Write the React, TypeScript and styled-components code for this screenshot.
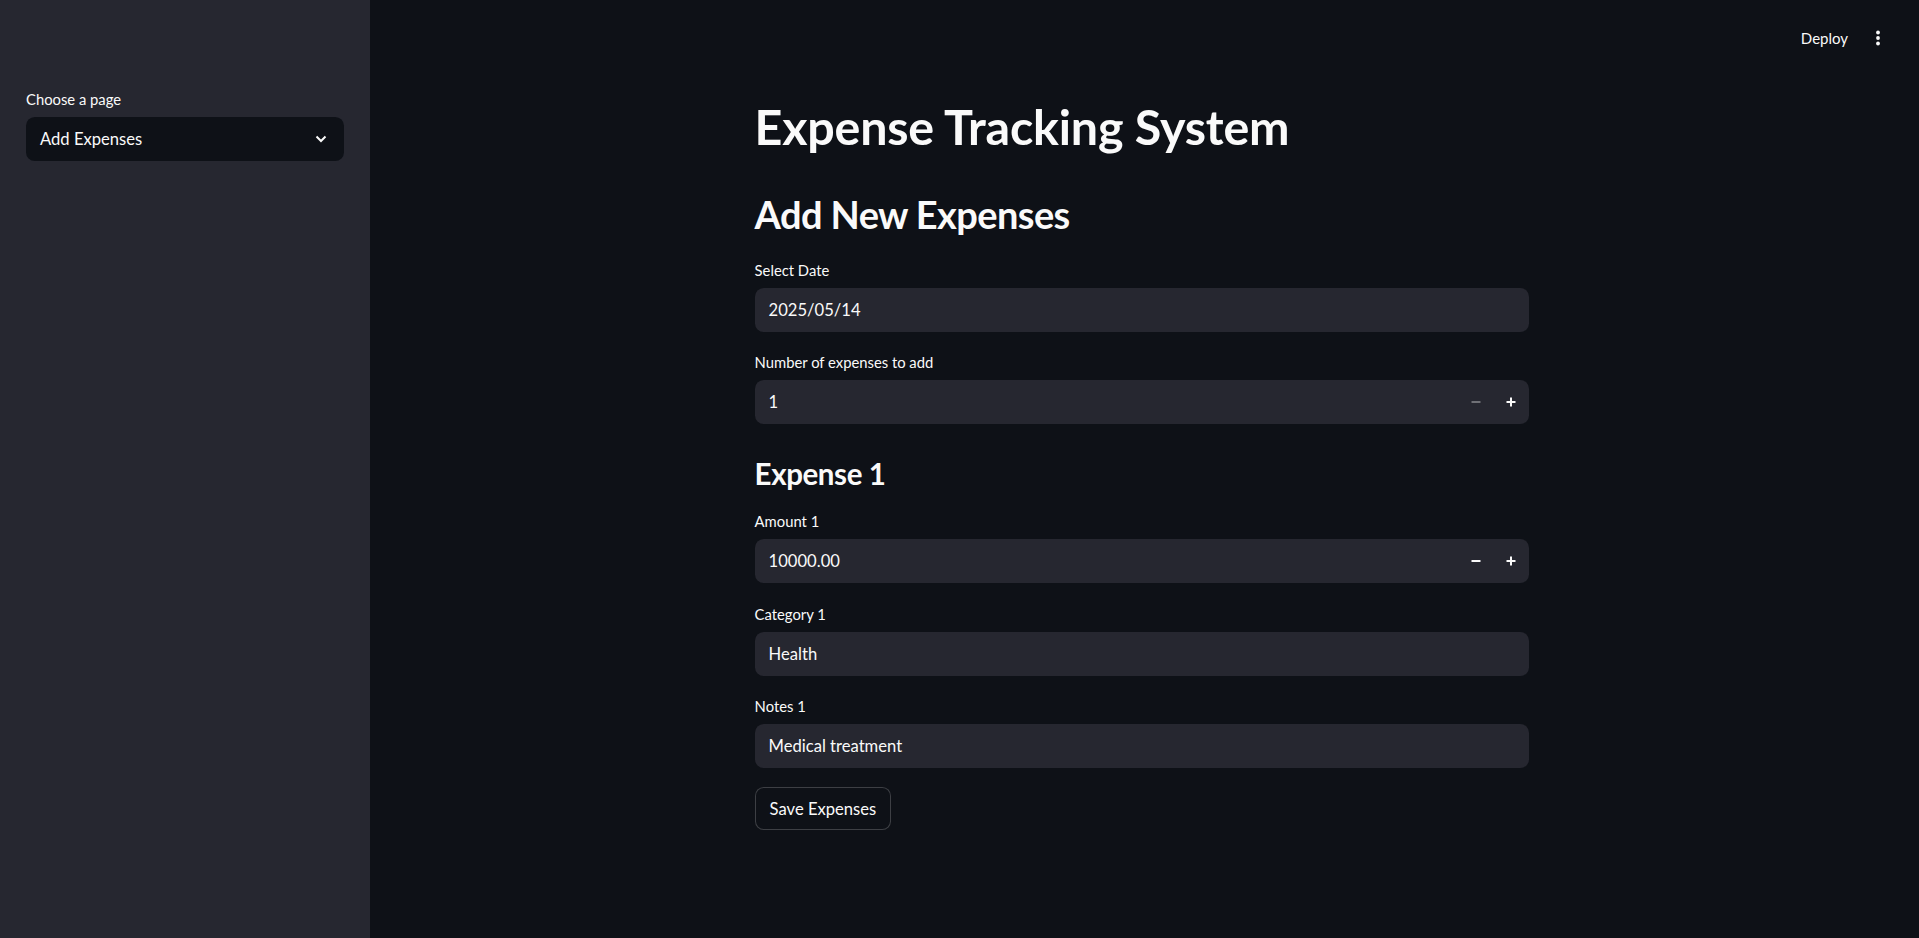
import React from "react";
import styled, { createGlobalStyle } from "styled-components";

const GlobalStyle = createGlobalStyle`
  html, body { margin: 0; padding: 0; background: #0e1117; }
  body {
    font-family: Lato, "Noto Sans", sans-serif;
    color: #fafafa;
    -webkit-font-smoothing: antialiased;
  }
  * { box-sizing: border-box; }
`;

const Shell = styled.div`
  display: flex;
  width: 100%;
  height: 938px;
  overflow: hidden;
  background: #0e1117;
`;

const Sidebar = styled.aside`
  flex: none;
  width: 370px;
  background: #262730;
  padding: 87px 26px 0 26px;
  display: flex;
  flex-direction: column;
`;

const Main = styled.main`
  flex: 1;
  display: flex;
  flex-direction: column;
  min-width: 0;
  padding-right: 5px;
`;

const Header = styled.header`
  height: 66px;
  padding: 10px 19px 0 0;
  display: flex;
  align-items: center;
  justify-content: flex-end;
  gap: 2px;
`;

const DeployButton = styled.button`
  background: transparent;
  border: none;
  color: #fafafa;
  font-family: inherit;
  font-size: 15px;
  padding: 6px 10px;
  cursor: pointer;
`;

const MenuButton = styled.button`
  width: 35px;
  height: 35px;
  background: transparent;
  border: none;
  display: flex;
  align-items: center;
  justify-content: center;
  padding: 0;
  cursor: pointer;
`;

const Content = styled.div`
  width: 810px;
  margin: 0 auto;
  padding: 31px 17.6px 0 17.6px;
  display: flex;
  flex-direction: column;
  align-items: stretch;
`;

const headingStyles: Record<number, { size: number; weight: number; spacing: number }> = {
  1: { size: 48.4, weight: 700, spacing: -0.2 },
  2: { size: 38, weight: 700, spacing: -0.6 },
  3: { size: 29.5, weight: 700, spacing: -0.4 },
};

const Heading = styled.h1<{ $level: 1 | 2 | 3; $mt: number }>`
  margin: ${(p) => p.$mt}px 0 0 0;
  padding: 0;
  font-size: ${(p) => headingStyles[p.$level].size}px;
  font-weight: ${(p) => headingStyles[p.$level].weight};
  letter-spacing: ${(p) => headingStyles[p.$level].spacing}px;
  line-height: 1.2;
  color: #fafafa;
`;

const Field = styled.div<{ $mt: number }>`
  margin-top: ${(p) => p.$mt}px;
  display: flex;
  flex-direction: column;
  gap: 6px;
`;

const Label = styled.label`
  font-size: 14.8px;
  line-height: 24px;
  height: 24px;
  color: #fafafa;
`;

const InputBox = styled.div<{ $dark?: boolean }>`
  height: 44px;
  border-radius: 8.8px;
  background: ${(p) => (p.$dark ? "#0e1117" : "#262730")};
  display: flex;
  align-items: center;
  padding-left: 14px;
  font-size: 16.6px;
  color: #fafafa;
`;

const InputText = styled.span`
  flex: 1;
  white-space: nowrap;
`;

const Chevron = styled.span`
  width: 46px;
  display: flex;
  align-items: center;
  justify-content: center;
`;

const Stepper = styled.div`
  display: flex;
  align-items: center;
  height: 100%;
  padding-right: 1px;
`;

const StepButton = styled.button<{ $disabled?: boolean }>`
  width: 35px;
  height: 100%;
  background: transparent;
  border: none;
  padding: 0;
  display: flex;
  align-items: center;
  justify-content: center;
  color: ${(p) => (p.$disabled ? "rgba(250,250,250,0.35)" : "#fafafa")};
`;

const SaveButton = styled.button`
  margin-top: 19px;
  align-self: flex-start;
  height: 43px;
  padding: 0 14px;
  border-radius: 8.8px;
  border: 1px solid rgba(250, 250, 250, 0.2);
  background: #0e1117;
  color: #fafafa;
  font-family: inherit;
  font-size: 16.6px;
  cursor: pointer;
`;

const Minus = () => (
  <svg width="10" height="10" viewBox="0 0 10 10">
    <rect x="0.5" y="4" width="9" height="2" fill="currentColor" />
  </svg>
);

const Plus = () => (
  <svg width="10" height="10" viewBox="0 0 10 10">
    <rect x="0.5" y="4" width="9" height="2" fill="currentColor" />
    <rect x="4" y="0.5" width="2" height="9" fill="currentColor" />
  </svg>
);

const NumberInput: React.FC<{ value: string; minDisabled?: boolean }> = ({ value, minDisabled }) => (
  <InputBox>
    <InputText>{value}</InputText>
    <Stepper>
      <StepButton $disabled={minDisabled}>
        <Minus />
      </StepButton>
      <StepButton>
        <Plus />
      </StepButton>
    </Stepper>
  </InputBox>
);

export default function App() {
  return (
    <>
      <GlobalStyle />
      <Shell>
        <Sidebar>
          <Field $mt={0}>
            <Label>Choose a page</Label>
            <InputBox $dark>
              <InputText>Add Expenses</InputText>
              <Chevron>
                <svg width="12" height="8" viewBox="0 0 12 8">
                  <path d="M1.5 1.5 L6 6 L10.5 1.5" stroke="#fafafa" strokeWidth="2" fill="none" />
                </svg>
              </Chevron>
            </InputBox>
          </Field>
        </Sidebar>
        <Main>
          <Header>
            <DeployButton>Deploy</DeployButton>
            <MenuButton aria-label="Main menu">
              <svg width="6" height="16" viewBox="0 0 6 16">
                <circle cx="3" cy="2.5" r="1.9" fill="#fafafa" />
                <circle cx="3" cy="8" r="1.9" fill="#fafafa" />
                <circle cx="3" cy="13.5" r="1.9" fill="#fafafa" />
              </svg>
            </MenuButton>
          </Header>
          <Content>
            <Heading as="h1" $level={1} $mt={0}>Expense Tracking System</Heading>
            <Heading as="h2" $level={2} $mt={37}>Add New Expenses</Heading>
            <Field $mt={20}>
              <Label>Select Date</Label>
              <InputBox>
                <InputText>2025/05/14</InputText>
              </InputBox>
            </Field>
            <Field $mt={18}>
              <Label>Number of expenses to add</Label>
              <NumberInput value="1" minDisabled />
            </Field>
            <Heading as="h3" $level={3} $mt={32}>Expense 1</Heading>
            <Field $mt={18}>
              <Label>Amount 1</Label>
              <NumberInput value="10000.00" />
            </Field>
            <Field $mt={19}>
              <Label>Category 1</Label>
              <InputBox>
                <InputText>Health</InputText>
              </InputBox>
            </Field>
            <Field $mt={18}>
              <Label>Notes 1</Label>
              <InputBox>
                <InputText>Medical treatment</InputText>
              </InputBox>
            </Field>
            <SaveButton>Save Expenses</SaveButton>
          </Content>
        </Main>
      </Shell>
    </>
  );
}
